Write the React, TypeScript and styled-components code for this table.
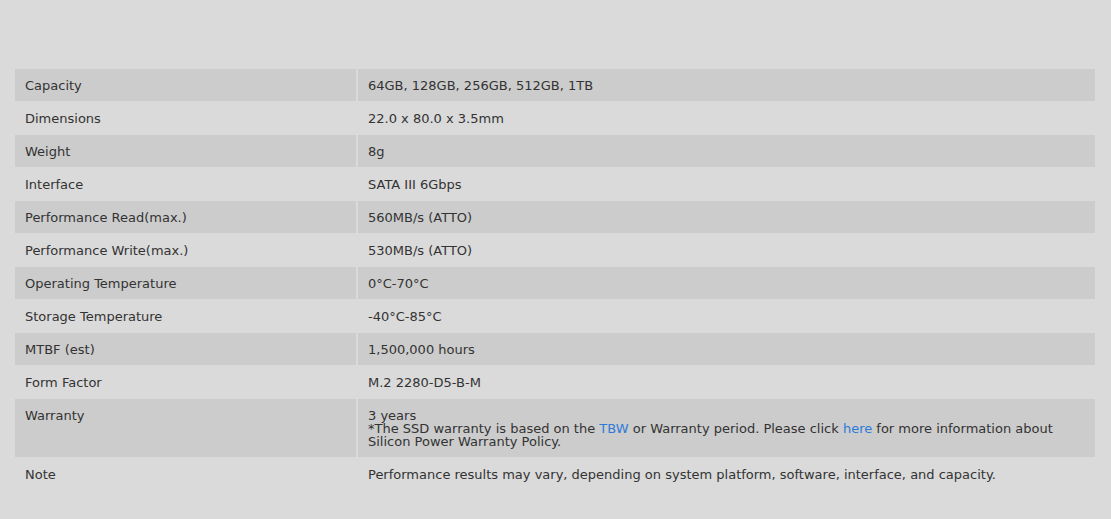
import React from "react";
import styled, { createGlobalStyle } from "styled-components";

const Global = createGlobalStyle`
  html, body { margin: 0; padding: 0; background: #dadada; }
  body { font-family: Verdana, "DejaVu Sans", sans-serif; }
`;

const Page = styled.div`
  min-height: 519px;
  box-sizing: border-box;
  padding: 69px 16px 0 15px;
  background: #dadada;
`;

const Table = styled.div`
  display: flex;
  flex-direction: column;
  gap: 1px;
`;

const Row = styled.div`
  display: grid;
  grid-template-columns: 341px 1fr;
  gap: 2px;
`;

const Cell = styled.div<{ $shaded: boolean }>`
  background: ${(p) => (p.$shaded ? "#cccccc" : "transparent")};
  padding: 10px 10px 9px;
  font-size: 13px;
  line-height: 13px;
  color: #333333;
`;

const Link = styled.a`
  color: #2f7ad8;
  text-decoration: none;
`;

const rows: [string, React.ReactNode][] = [
  ["Capacity", "64GB, 128GB, 256GB, 512GB, 1TB"],
  ["Dimensions", "22.0 x 80.0 x 3.5mm"],
  ["Weight", "8g"],
  ["Interface", "SATA III 6Gbps"],
  ["Performance Read(max.)", "560MB/s (ATTO)"],
  ["Performance Write(max.)", "530MB/s (ATTO)"],
  ["Operating Temperature", "0°C-70°C"],
  ["Storage Temperature", "-40°C-85°C"],
  ["MTBF (est)", "1,500,000 hours"],
  ["Form Factor", "M.2 2280-D5-B-M"],
  [
    "Warranty",
    <>
      3 years
      <br />
      *The SSD warranty is based on the <Link href="#">TBW</Link> or Warranty period. Please click{" "}
      <Link href="#">here</Link> for more information about Silicon Power Warranty Policy.
    </>,
  ],
  ["Note", "Performance results may vary, depending on system platform, software, interface, and capacity."],
];

export default function App() {
  return (
    <>
      <Global />
      <Page>
        <Table>
          {rows.map(([k, v], i) => (
            <Row key={k}>
              <Cell $shaded={i % 2 === 0}>{k}</Cell>
              <Cell $shaded={i % 2 === 0}>{v}</Cell>
            </Row>
          ))}
        </Table>
      </Page>
    </>
  );
}
